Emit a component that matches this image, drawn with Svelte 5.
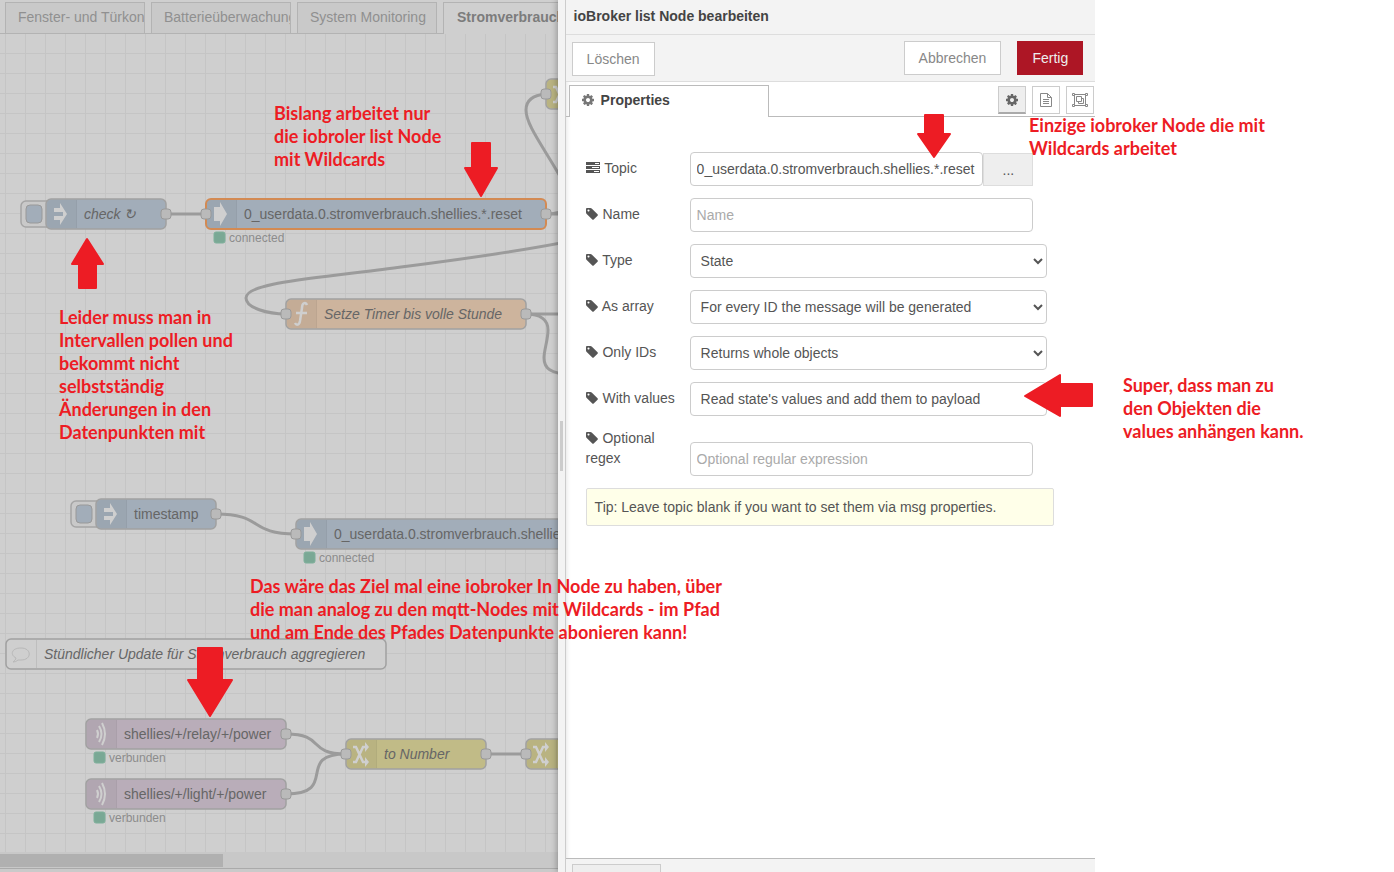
<script>
    const GEAR = 'M1152 896q0-106-75-181t-181-75-181 75-75 181 75 181 181 75 181-75 75-181zm512-109v222q0 12-8 23t-20 13l-185 28q-19 54-39 91 35 50 107 138 10 12 10 25t-9 23q-27 37-99 108t-94 71q-12 0-26-9l-138-108q-44 23-91 38-16 136-29 186-7 28-36 28h-222q-14 0-24.5-8.5t-11.5-21.5l-28-184q-49-16-90-37l-141 107q-10 9-25 9-14 0-25-11-126-114-165-168-7-10-7-23 0-12 8-23 15-21 51-66.5t54-70.5q-27-50-41-99l-183-27q-13-2-21-12.5t-8-23.5v-222q0-12 8-23t19-13l186-28q14-46 39-92-40-57-107-138-10-12-10-24 0-10 9-23 26-36 98.5-107.5t94.5-71.5q13 0 26 10l138 107q44-23 91-38 16-136 29-186 7-28 36-28h222q14 0 24.5 8.5t11.5 21.5l28 184q49 16 90 37l142-107q9-9 24-9 13 0 25 10 129 119 165 170 7 8 7 22 0 12-8 23-15 21-51 66.5t-54 70.5q26 50 41 98l183 28q13 2 21 12.5t8 23.5z';
    const TAG = 'M576 448q0-53-37.5-90.5t-90.5-37.5-90.5 37.5-37.5 90.5 37.5 90.5 90.5 37.5 90.5-37.5 37.5-90.5zm1067 576q0 53-37 90l-491 492q-39 37-91 37-53 0-90-37l-715-716q-38-37-64.5-101t-26.5-117v-416q0-52 38-90t90-38h416q53 0 117 26.5t102 64.5l715 714q37 39 37 91z';

    const tabs = ['Fenster- und Türkontakte', 'Batterieüberwachung', 'System Monitoring', 'Stromverbrauch'];
    let activeTab = 'Stromverbrauch';

    // canvas coordinates, y is measured from the top of the sheet
    const nodes = [
        { x: 46, y: 165, w: 120, fill: '#a2adb9', icon: 'inject', label: 'check ↻', italic: true, button: true, out: true },
        { x: 206, y: 165, w: 340, fill: '#a2adb9', icon: 'arrow', label: '0_userdata.0.stromverbrauch.shellies.*.reset', selected: true, status: 'connected', in: true, out: true },
        { x: 546, y: 45, w: 140, fill: '#c1bb87', icon: 'change', label: '', in: true },
        { x: 286, y: 265, w: 240, fill: '#cdb49d', icon: 'function', label: 'Setze Timer bis volle Stunde', italic: true, in: true, out: true },
        { x: 96, y: 465, w: 120, fill: '#a2adb9', icon: 'inject', label: 'timestamp', button: true, out: true },
        { x: 296, y: 485, w: 340, fill: '#a2adb9', icon: 'arrow', label: '0_userdata.0.stromverbrauch.shellies.*.reset', status: 'connected', in: true },
        { x: 6, y: 605, w: 380, fill: '#cfcfcf', icon: 'comment', label: 'Stündlicher Update für Stromverbrauch aggregieren', italic: true },
        { x: 86, y: 685, w: 200, fill: '#b9adb9', icon: 'mqtt', label: 'shellies/+/relay/+/power', status: 'verbunden', out: true },
        { x: 86, y: 745, w: 200, fill: '#b9adb9', icon: 'mqtt', label: 'shellies/+/light/+/power', status: 'verbunden', out: true },
        { x: 346, y: 705, w: 140, fill: '#c1bb87', icon: 'change', label: 'to Number', italic: true, in: true, out: true },
        { x: 526, y: 705, w: 140, fill: '#c1bb87', icon: 'change', label: '', in: true }
    ];
    const wires = [
        'M166 180H206',
        'M546 180C552 180 558 179 566 176',
        'M546 180H566',
        'M566 153C546 116 526 92 526 76C526 66 534 61 546 60',
        'M566 208C500 221 440 228 378 236C310 245 246 249 246 264C246 274 268 280 286 280',
        'M526 280H566',
        'M526 280C542 280 548 287 548 296C548 306 544 316 544 324C544 335 552 339 566 340',
        'M216 480C264 480 248 500 296 500',
        'M286 700C326 700 306 720 346 720',
        'M286 760C340 760 294 720 346 720',
        'M486 720H526'
    ];

    let topic = '0_userdata.0.stromverbrauch.shellies.*.reset';
    let name = '';
    let regex = '';
    const selects = [
        { id: 'type', label: 'Type', options: ['State', 'Object'] },
        { id: 'as-array', label: 'As array', options: ['For every ID the message will be generated', 'Array', 'Object'] },
        { id: 'only-ids', label: 'Only IDs', options: ['Returns whole objects', 'Returns only IDs'] },
        { id: 'with-values', label: 'With values', options: ["Read state's values and add them to payload", 'Do not read values'] }
    ];

    const notes = [
        { x: 274, y: 102, lines: ['Bislang arbeitet nur', 'die iobroler list Node', 'mit Wildcards'] },
        { x: 59, y: 306, lines: ['Leider muss man in', 'Intervallen pollen und', 'bekommt nicht', 'selbstständig', 'Änderungen in den', 'Datenpunkten mit'] },
        { x: 1029, y: 114, lines: ['Einzige iobroker Node die mit', 'Wildcards arbeitet'] },
        { x: 1123, y: 374, lines: ['Super, dass man zu', 'den Objekten die', 'values anhängen kann.'] },
        { x: 250, y: 575, lines: ['Das wäre das Ziel mal eine iobroker In Node zu haben, über', 'die man analog zu den mqtt-Nodes mit Wildcards - im Pfad', 'und am Ende des Pfades Datenpunkte abonieren kann!'] }
    ];
    const arrows = [
        'M472 143H490V168H497L481 196L465 168H472Z',
        'M925 115H943V134H950L934 157L918 134H925Z',
        'M79 288H96V264H103L87 239L72 264H79Z',
        'M198 648H222V680H232L210 716L188 680H198Z',
        'M1092 384V406H1060V416L1025 396L1060 375V384Z'
    ];
</script>

<div class="editor">
    <main class="workspace">
        <nav class="tabs">
            {#each tabs as tab}
                <button class="tab" class:active={tab === activeTab} on:click={() => activeTab = tab}>{tab}</button>
            {/each}
        </nav>
        <div class="sheet">
            <svg class="canvas" width="100%" height="100%">
                <defs>
                    <pattern id="grid" x="5" y="-1" width="20" height="20" patternUnits="userSpaceOnUse">
                        <path d="M0 .5H20M.5 0V20" stroke="#c5c5c5" fill="none" />
                    </pattern>
                </defs>
                <rect width="100%" height="100%" fill="url(#grid)" />
                {#each wires as wire}
                    <path class="wire" d={wire} />
                {/each}
                {#each nodes as node}
                    <g transform="translate({node.x} {node.y})">
                        {#if node.button}
                            <rect class="trigger" x="-25" y="2" width="32" height="26" rx="5" />
                            <rect x="-20" y="6" width="16" height="18" rx="4" fill={node.fill} stroke="#999" />
                        {/if}
                        <rect class="body" class:selected={node.selected} width={node.w} height="30" rx="5" fill={node.fill} />
                        <path d="M5 1H30V29H5Q1 29 1 25V5Q1 1 5 1Z" fill="#000" fill-opacity={node.icon === 'comment' ? 0 : 0.04} />
                        <path d="M30.5 1V29" stroke="#000" stroke-opacity="0.08" />
                        {#if node.icon === 'inject'}
                            <path d="M8 9H14V4L21 15L14 26V21H8V17H17V13H8Z" fill="#cfcfcf" />
                        {:else if node.icon === 'arrow'}
                            <path d="M8 8H14V3L21 15L14 27V22H8Z" fill="#cfcfcf" />
                        {:else if node.icon === 'change'}
                            <path d="M7 8H10L17 23H20M7 23H10L17 8H20" fill="none" stroke="#cfcfcf" stroke-width="2.5" />
                            <path d="M19 3L23 8L19 13ZM19 18L23 23L19 28Z" fill="#cfcfcf" />
                        {:else if node.icon === 'function'}
                            <path d="M21 6C20 3 16 3 16 9L14 22C13 27 10 26 9 24M10 14H21" fill="none" stroke="#cfcfcf" stroke-width="2.5" />
                        {:else if node.icon === 'mqtt'}
                            <path d="M11 11Q13 15 11 19M13 7Q18 15 13 23M16 4Q22 15 16 26" fill="none" stroke="#cfcfcf" stroke-width="2" />
                        {:else if node.icon === 'comment'}
                            <path d="M10 19C4 16 5 9 15 9C26 9 26 21 15 21L12 21Q10 23 7 23Q10 21 10 19Z" fill="none" stroke="#b8b8b8" />
                        {/if}
                        <text class="label" class:italic={node.italic} x="38" y="20">{node.label}</text>
                        {#if node.in}<rect class="port" x="-5" y="10" width="10" height="10" rx="3" />{/if}
                        {#if node.out}<rect class="port" x={node.w - 5} y="10" width="10" height="10" rx="3" />{/if}
                        {#if node.status}
                            <rect x="8" y="33" width="11" height="11" rx="2" fill="#7aa895" stroke="#7fb09b" />
                            <text class="status" x="23" y="43">{node.status}</text>
                        {/if}
                    </g>
                {/each}
            </svg>
        </div>
        <div class="scrollbar"><div class="thumb"></div></div>
        <div class="workspace-footer"></div>
    </main>

    <div class="resizer"><div class="grip"></div></div>

    <section class="tray">
        <h1>ioBroker list Node bearbeiten</h1>
        <div class="toolbar">
            <button class="btn delete">Löschen</button>
            <div class="actions">
                <button class="btn">Abbrechen</button>
                <button class="btn primary">Fertig</button>
            </div>
        </div>
        <div class="tray-tabs">
            <button class="tray-tab">
                <svg width="14" height="14" viewBox="0 0 1792 1792"><path d={GEAR} fill="#777" /></svg>
                Properties
            </button>
            <div class="modes">
                <button class="mode on" aria-label="Properties">
                    <svg width="14" height="14" viewBox="0 0 1792 1792"><path d={GEAR} fill="#666" /></svg>
                </button>
                <button class="mode" aria-label="Description">
                    <svg width="14" height="16" viewBox="0 0 14 16" fill="none" stroke="#888"><path d="M1.5 1.5H8.5L12.5 5.5V14.5H1.5ZM8.5 1.5V5.5H12.5M4 7.5H10M4 9.5H10M4 11.5H10" /></svg>
                </button>
                <button class="mode" aria-label="Appearance">
                    <svg width="16" height="16" viewBox="0 0 16 16" fill="none" stroke="#888"><path d="M2 2.5H14M2 13.5H14M2.5 2V14M13.5 2V14M4.5 4.5H9.5V9.5H4.5ZM10 6.5H11.5V11.5H6.5V10" /><path d="M.5 1.5H2.5V3.5H.5ZM13.5 1.5H15.5V3.5H13.5ZM.5 12.5H2.5V14.5H.5ZM13.5 12.5H15.5V14.5H13.5Z" fill="#fff" /></svg>
                </button>
            </div>
        </div>

        <form on:submit|preventDefault>
            <div class="row">
                <label for="topic">
                    <svg width="14" height="12" viewBox="0 0 14 12"><path d="M0 0H14V3H0ZM0 4H14V7H0ZM0 8H14V11H0Z" fill="#555" /><path d="M9 1.5H13M6 5.5H13M8 9.5H13" stroke="#fff" /></svg>
                    Topic
                </label>
                <div class="group">
                    <input id="topic" type="text" bind:value={topic}>
                    <button type="button" class="browse">...</button>
                </div>
            </div>
            <div class="row">
                <label for="name">
                    <svg width="12" height="12" viewBox="128 128 1536 1536"><path d={TAG} fill="#555" /></svg>
                    Name
                </label>
                <input id="name" type="text" placeholder="Name" bind:value={name}>
            </div>
            {#each selects as field}
                <div class="row">
                    <label for={field.id}>
                        <svg width="12" height="12" viewBox="128 128 1536 1536"><path d={TAG} fill="#555" /></svg>
                        {field.label}
                    </label>
                    <select id={field.id}>
                        {#each field.options as option}
                            <option>{option}</option>
                        {/each}
                    </select>
                </div>
            {/each}
            <div class="row">
                <label for="regex">
                    <svg width="12" height="12" viewBox="128 128 1536 1536"><path d={TAG} fill="#555" /></svg>
                    Optional regex
                </label>
                <input id="regex" type="text" placeholder="Optional regular expression" bind:value={regex}>
            </div>
            <div class="tip">Tip: Leave topic blank if you want to set them via msg properties.</div>
        </form>

        <footer>
            <button class="enable">Aktiviert</button>
        </footer>
    </section>

    <svg class="arrows" width="100%" height="100%">
        {#each arrows as arrow}
            <path d={arrow} />
        {/each}
    </svg>
    {#each notes as note}
        <p class="note" style="left: {note.x}px; top: {note.y}px">
            {#each note.lines as line}
                <span>{line}</span>
            {/each}
        </p>
    {/each}
</div>

<style>
    :global(body) {
        background: #fff;
    }
    .editor, .editor * {
        box-sizing: border-box;
    }
    .editor {
        position: relative;
        display: flex;
        height: 100vh;
        overflow: hidden;
        font: 14px/20px "Liberation Sans", Arial, sans-serif;
        color: #555;
    }
    button, input, select {
        font: inherit;
        color: inherit;
        margin: 0;
    }
    .workspace {
        width: 40%;
        min-width: 0;
        display: flex;
        flex-direction: column;
        background: #cfcfcf;
        overflow: hidden;
    }
    .tabs {
        display: flex;
        gap: 6px;
        height: 34px;
        flex: none;
        padding: 2px 0 0 5px;
        border-bottom: 1px solid #b3b3b3;
    }
    .tab {
        flex: 0 0 140px;
        height: 31px;
        padding: 0 0 2px 12px;
        border: 1px solid #b3b3b3;
        border-bottom: 0;
        background: #c9c9c9;
        color: #909090;
        text-align: left;
        white-space: nowrap;
        overflow: hidden;
    }
    .tab.active {
        height: 32px;
        padding: 0 0 3px 13px;
        background: #cfcfcf;
        color: #7c7c7c;
        font-weight: bold;
    }
    .sheet {
        flex: 1;
        min-height: 0;
    }
    .canvas {
        display: block;
    }
    .wire {
        fill: none;
        stroke: #9b9b9b;
        stroke-width: 3;
    }
    .body {
        stroke: #a1a1a1;
        stroke-width: 1.5;
    }
    .body.selected {
        stroke: #d38a53;
        stroke-width: 2;
    }
    .trigger {
        fill: #c9c9c9;
        stroke: #a5a5a5;
        stroke-width: 1.5;
    }
    .port {
        fill: #bababa;
        stroke: #999;
    }
    .label {
        fill: #666;
    }
    .label.italic {
        font-style: italic;
    }
    .status {
        font-size: 12px;
        fill: #8c8c8c;
    }
    .scrollbar {
        height: 16px;
        flex: none;
        padding: 2px 0 1px;
        background: #c8c8c8;
    }
    .thumb {
        width: 40%;
        height: 13px;
        background: #b0b0b0;
    }
    .workspace-footer {
        height: 4px;
        flex: none;
        border-top: 1px solid #aaa;
        background: #cacaca;
    }
    .resizer {
        position: relative;
        width: 8px;
        flex: none;
        display: flex;
        align-items: center;
        padding: 20px 0 0 2px;
        background: #f3f3f3;
        border-right: 1px solid #ccc;
        box-shadow: -1px 0 6px rgba(0, 0, 0, 0.3);
    }
    .grip {
        width: 3px;
        height: 50px;
        background: #ccc;
    }
    .tray {
        position: relative;
        width: 38%;
        display: flex;
        flex-direction: column;
        background: #fff;
        box-shadow: inset 4px 0 4px -3px rgba(0, 0, 0, 0.1);
    }
    h1 {
        height: 35px;
        margin: 0;
        padding: 6px 8px;
        background: #f3f3f3;
        border-bottom: 1px solid #ddd;
        font-size: 14px;
        line-height: 20px;
        color: #444;
    }
    .toolbar {
        display: flex;
        justify-content: space-between;
        height: 47px;
        padding: 6px 12px 0 6px;
        background: #f3f3f3;
        border-bottom: 1px solid #ddd;
    }
    .actions {
        display: flex;
        gap: 16px;
    }
    .btn {
        height: 34px;
        padding: 0 14px;
        border: 1px solid #ccc;
        background: #fff;
        color: #888;
    }
    .delete {
        margin-top: 1px;
    }
    .primary {
        min-width: 66px;
        border-color: #ad1625;
        background: #ad1625;
        color: #eee;
    }
    .tray-tabs {
        display: flex;
        justify-content: space-between;
        height: 35px;
        padding: 3px 1px 0 3px;
        border-bottom: 1px solid #bbb;
    }
    .tray-tab {
        display: flex;
        align-items: center;
        gap: 6px;
        width: 200px;
        height: 32px;
        padding: 0 0 4px 11px;
        border: 1px solid #bbb;
        border-bottom: 0;
        background: #fff;
        color: #444;
        font-weight: bold;
    }
    .modes {
        display: flex;
        gap: 6px;
        padding-top: 1px;
    }
    .mode {
        display: flex;
        align-items: center;
        justify-content: center;
        width: 28px;
        height: 28px;
        padding: 0;
        border: 1px solid #ccc;
        background: #fff;
    }
    .mode.on {
        background: #eee;
        border-bottom: 2px solid #aaa;
    }
    form {
        flex: 1;
        padding: 35px 20px 0;
    }
    .row {
        display: flex;
        align-items: flex-end;
        margin-bottom: 12px;
    }
    label {
        width: 104px;
        flex: none;
        padding: 0 14px 8px 0;
    }
    label[for="with-values"] {
        white-space: nowrap;
    }
    label svg {
        margin-right: 1px;
        vertical-align: -1px;
    }
    input, select {
        width: calc(70% + 1px);
        height: 34px;
        padding: 6px;
        border: 1px solid #ccc;
        border-radius: 4px;
        background: #fff;
    }
    select {
        width: calc(70% + 15px);
    }
    input::placeholder {
        color: #aaa;
    }
    .group {
        display: flex;
        align-items: flex-end;
        width: calc(70% + 1px);
    }
    .group input {
        flex: 1;
        min-width: 0;
    }
    .browse {
        width: 50px;
        height: 33px;
        padding: 0;
        border: 1px solid #ddd;
        background: #eee;
    }
    .tip {
        margin-right: 21px;
        padding: 8px;
        border: 1px solid #ddd;
        border-radius: 2px;
        background: #ffffe9;
    }
    footer {
        height: 14px;
        flex: none;
        padding: 5px 6px 0;
        background: #f3f3f3;
        border-top: 1px solid #bbb;
        overflow: hidden;
    }
    .enable {
        height: 34px;
        width: 89px;
        border: 1px solid #ccc;
        background: #eee;
        color: #ddd;
    }
    .arrows {
        position: absolute;
        inset: 0;
        pointer-events: none;
        fill: #ed1c24;
        stroke: #ed1c24;
        stroke-width: 2;
        stroke-linejoin: round;
    }
    .note {
        position: absolute;
        margin: 0;
        font: bold 18px/23px Lato, sans-serif;
        color: #ed1c24;
        white-space: nowrap;
    }
    .note span {
        display: block;
    }
</style>
